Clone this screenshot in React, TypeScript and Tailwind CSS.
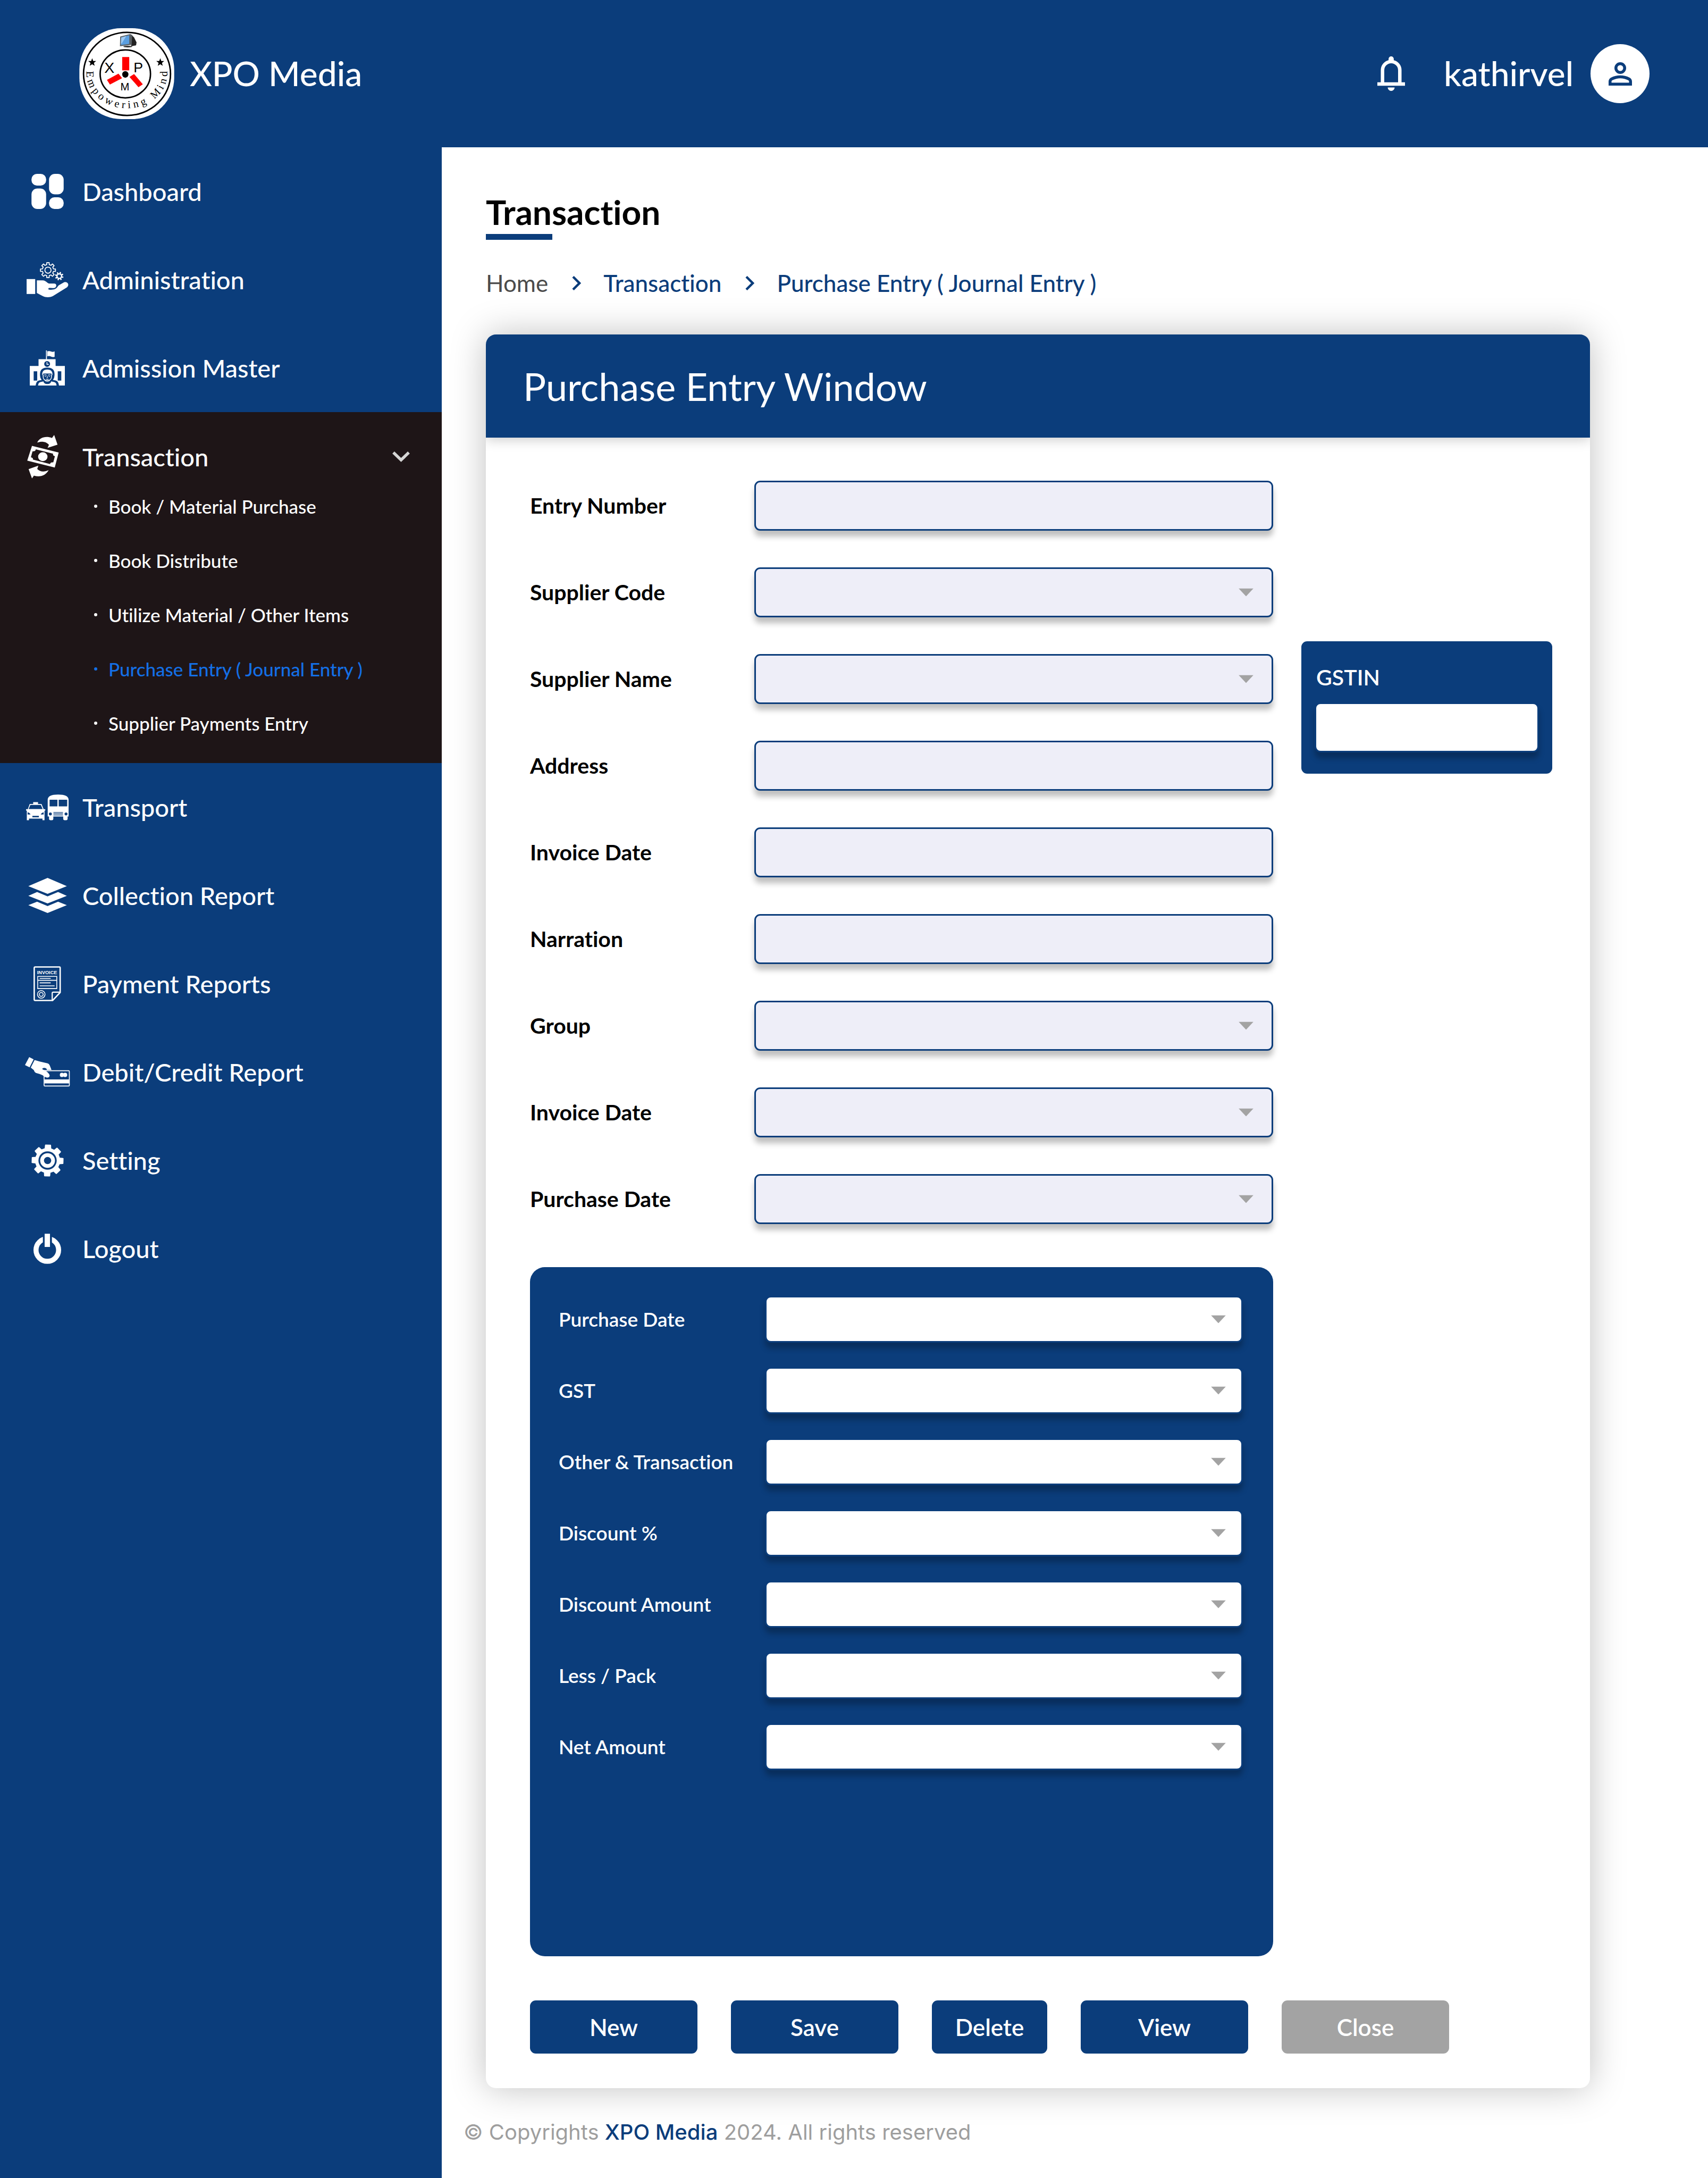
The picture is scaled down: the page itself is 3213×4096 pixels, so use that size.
import type { ReactNode } from 'react';

const NAVY = '#0b3d7b';

/** Outline of a toothed wheel as an SVG path. */
function gearPath(cx: number, cy: number, outer: number, inner: number, teeth: number, turn = 0) {
  const step = (Math.PI * 2) / teeth;
  const points: string[] = [];
  for (let i = 0; i < teeth; i++) {
    const a = i * step + turn - Math.PI / 2;
    const corners: [number, number][] = [
      [inner, -0.29],
      [outer, -0.2],
      [outer, 0.2],
      [inner, 0.29],
    ];
    for (const [r, t] of corners) {
      points.push(`${(cx + r * Math.cos(a + t * step)).toFixed(2)} ${(cy + r * Math.sin(a + t * step)).toFixed(2)}`);
    }
  }
  return `M${points.join('L')}Z`;
}

function Logo() {
  const star = (x: number, y: number) => {
    const pts: string[] = [];
    for (let i = 0; i < 10; i++) {
      const r = i % 2 ? 3.6 : 8.6;
      const a = (i * Math.PI) / 5 - Math.PI / 2;
      pts.push(`${(x + r * Math.cos(a)).toFixed(1)},${(y + r * Math.sin(a)).toFixed(1)}`);
    }
    return <polygon points={pts.join(' ')} fill="#000" />;
  };
  return (
    <svg viewBox="0 0 194 186" className="h-[171px] w-[179px]" role="img" aria-label="XPO Media logo">
      <rect width="194" height="186" rx="86" ry="84" fill="#fff" />
      <ellipse cx="97.5" cy="93.5" rx="89" ry="85" fill="none" stroke="#000" strokeWidth="3" />
      <ellipse cx="94" cy="93.5" rx="51.5" ry="49" fill="none" stroke="#000" strokeWidth="3" />
      <ellipse cx="94" cy="94.5" rx="6.4" ry="6.8" fill="#000" />
      <rect x="87.6" y="59" width="14.4" height="27.3" fill="#f00" />
      <polygon points="56.4,105.7 80,93 87.4,102.3 62.5,115.3" fill="#f00" />
      <polygon points="102.5,99.7 111.9,93.7 129.8,114.7 120.9,120.7" fill="#f00" />
      <g fontFamily="Liberation Sans, sans-serif" fill="#000">
        <text x="51" y="91" fontSize="31">X</text>
        <text x="111" y="90" fontSize="29">P</text>
        <text x="84" y="127" fontSize="22">M</text>
      </g>
      {star(26.2, 70)}
      {star(165.5, 70)}
      <polygon points="107,14 112,19 117,29 116,35 106,37" fill="#222" />
      <polygon points="83.5,17 104,12 108,14 107,34 83,37" fill="#596066" />
      <polygon points="85.5,19 102,14.5 102,32 85,34.5" fill="#5b9fe0" />
      <polygon points="85.5,19 96,16 87,31 85,32" fill="#9bc8f2" />
      <ellipse cx="99" cy="37.6" rx="9" ry="1.8" fill="#333" />
      <path id="motto" d="M14.6 80V93A82.5 70.5 0 0 0 180 93V78" fill="none" />
      <text fontFamily="Liberation Serif, serif" fontSize="22" fill="#000" dx="0 6 6 6 6 6 6 6 6 6 6 6 6 6 6">
        <textPath href="#motto" startOffset="8">Empowering Mind</textPath>
      </text>
    </svg>
  );
}

const icons = {
  dashboard: (
    <svg viewBox="0 0 66 72" className="h-[66px] w-[61px]" fill="#fff" aria-hidden="true">
      <rect width="30" height="24" rx="11" />
      <rect x="36" width="30" height="42" rx="12" />
      <rect y="30" width="30" height="42" rx="12" />
      <rect x="36" y="48" width="30" height="24" rx="11" />
    </svg>
  ),
  administration: (
    <svg viewBox="0 0 86 72" className="h-[66px] w-[79px]" fill="#fff" aria-hidden="true">
      <rect y="34.7" width="17.6" height="30.6" />
      <path d="M21 37.3H33C40 37.3 42 44 48 44H56.5C62 44 62 50.5 58 52.5C55 53.8 50 53 46 53A1.8 1.8 0 0 0 46 56.5C54 57 60 56 63.5 50.5C64.5 48.5 65.5 47.5 67.5 46.5L77 41.3C84 39 88.5 46.5 83 51.5L54 69.500C47 73 39 72.5 33 69.5L21 63.3Z" />
      <path d={gearPath(43.8, 16.4, 15.6, 11.6, 8)} fill="none" stroke="#fff" strokeWidth="1.9" strokeLinejoin="round" />
      <circle cx="43.8" cy="16.4" r="6.3" fill="none" stroke="#fff" strokeWidth="1.9" />
      <path fillRule="evenodd" d={`${gearPath(67, 28.7, 8.8, 6, 8, 0.3)}M70.4 28.7A3.4 3.4 0 1 0 63.6 28.7A3.4 3.4 0 1 0 70.4 28.7Z`} />
    </svg>
  ),
  admission: (
    <svg viewBox="0 0 72 72" className="h-[66px] w-[66px]" fill="#fff" aria-hidden="true">
      <path d="M0 32H18V18H33.300V0H35.200V18H53V32H72V72H0Z" />
      <path d="M36 2Q40 .5 43.5 2.2T51 2V13Q47 14.5 43.5 12.5T36 12Z" />
      <circle cx="35.6" cy="27.7" r="6" fill={NAVY} />
      <path d="M35.3 24V28.6H39" fill="none" stroke="#fff" strokeWidth="1.5" />
      <path d="M8 42.7H15.3V62H8ZM57.4 42.7H64.7V62H57.4Z" fill={NAVY} />
      <path d="M12 72Q13 63 19 61.5L24.5 60.5Q20.5 56 21 48Q21.5 35.3 36 35.3T50.8 48Q51.2 56 47.5 60.5L53 61.5Q59 63 60 72Z" fill={NAVY} />
      <path d="M25.5 51Q24.5 39.3 36 39.3T46.5 51Q44.5 49 44 47.5L28 47.5Q27 49.5 25.5 51Z" />
      <path d="M27.5 49.5V53Q27 61.5 36 62Q45 61.5 44.5 53V49.5" fill="none" stroke="#fff" strokeWidth="1.6" />
      <path d="M29.5 50.5Q32 49 34.5 51M42.5 50.5Q40 49 37.5 51M30.5 53.2H33.5M38.5 53.2H41.5M36 52.5V56.5H34.8M33.5 59Q36 60.2 38.5 59" fill="none" stroke="#fff" strokeWidth="1.2" />
      <path d="M17 72Q17.5 66 22 65L28 63.5Q29 69 36 69T44 63.5L50 65Q54.5 66 55 72Z" />
      <path d="M30.5 61.5Q36 65.5 41.5 61.5" fill="none" stroke="#fff" strokeWidth="1.2" />
    </svg>
  ),
  transaction: (
    <svg viewBox="0 0 82 89" className="h-[82px] w-[76px]" fill="#fff" aria-hidden="true">
      <path d="M20.4 15.6C25 5 38 1.5 50.5 6.2L55 0L61.9 19.8L41.5 26.4L44.3 20.3C40 14 30 12 20.4 15.6Z" />
      <path d="M2.8 69.8L22.7 62.8L20.4 69.4C26 75 34 76.5 43.7 71.7C38 82.5 27 87 13.6 83L9.7 88.7Z" />
      <path
        fillRule="evenodd"
        d="M9.7 22.2L64.2 35.9L56.2 66.5L0 52.4ZM17.5 29.3Q17 34 10.8 33.3L7.5 45.5Q13 47 11.5 50.3L46.5 59.5Q47.5 55 53.2 56L56.5 43.5Q51.5 42 52.8 38.3Z"
      />
      <ellipse cx="31.8" cy="44.4" rx="9.6" ry="9" />
    </svg>
  ),
  transport: (
    <svg viewBox="0 0 87 53" className="h-[49px] w-[80px]" fill="#fff" aria-hidden="true">
      <path
        fillRule="evenodd"
        d="M44.3 10Q45 0 65.6 0T87 10V45H85V50Q85 52.5 82.5 52.5H78.5Q76 52.5 76 50V45H55.8V50Q55.8 52.5 53.5 52.5H49.5Q47 52.5 47 50V45H44.3ZM48.2 10.7V24.3H64.2V10.7ZM66.8 10.7V24.3H84.2V10.7Z"
      />
      <path d="M0 30H3.6L7.5 19.5H14.6V15.7H24.5V19.5H31.6L36 30H39.3V33H37.8V52.7H33.6V49.3H6V52.7H1.6V33H0Z" />
      <g fill={NAVY}>
        <path d="M5.3 29.7L8.8 21.2H30.3L34 29.7Z" />
        <path d="M3.3 36.3Q8 37.5 9 41H3.3ZM36 36.3Q31.5 37.5 30 41H36Z" />
        <rect x="13" y="43.7" width="13.2" height="3" />
        <circle cx="49.8" cy="39.7" r="3" />
        <circle cx="81.8" cy="39.7" r="3" />
        <rect x="56" y="36" width="19.5" height="1.3" />
        <rect x="56" y="38.7" width="19.5" height="1.3" />
        <rect x="56" y="41.4" width="19.5" height="1.3" />
      </g>
    </svg>
  ),
  collection: (
    <svg viewBox="0 0 79 72" className="h-[66px] w-[73px]" fill="#fff" aria-hidden="true">
      <path d="M39.5 0L79 17L39.5 32.7L0 17ZM0 36.7L18 29L39.5 38L61 29L79 36.7L39.5 52.3ZM0 56L18 48.7L39.5 57.7L61 48.7L79 56L39.5 72Z" />
    </svg>
  ),
  payment: (
    <svg viewBox="0 0 57 72" className="h-[66px] w-[52px]" fill="none" stroke="#fff" aria-hidden="true">
      <path d="M3.5 1.5H53.5Q55 1.5 55 3V54L39.5 70.5H3.5Q1.5 70.5 1.5 68.5V3.5Q1.5 1.5 3.5 1.5Z" strokeWidth="2.8" />
      <path d="M38.6 69.5V55.5Q38.6 53.5 40.6 53.5H55" strokeWidth="2.4" />
      <text x="7.5" y="16" fontSize="10" fontWeight="700" fontFamily="Liberation Sans, sans-serif" fill="#fff" stroke="none">
        INVOICE
      </text>
      <path d="M8.7 21H48V46H8.7ZM8.7 29H48" strokeWidth="1.7" />
      <path d="M12.7 25H35.5M12.7 34.2H35.5M12.7 40.4H43.5" strokeWidth="1.7" />
      <circle cx="16" cy="58" r="7.8" strokeWidth="1.7" />
      <circle cx="16" cy="58" r="4" strokeWidth="1.7" />
    </svg>
  ),
  debit: (
    <svg viewBox="0 0 93 61" className="h-[56px] w-[85px]" fill="#fff" aria-hidden="true">
      <path d="M8.7 0L17.8 4.5L9.5 21L0 16.2Z" />
      <rect x="39.3" y="27.9" width="52" height="31.4" rx="1.5" fill="none" stroke="#fff" strokeWidth="1.8" />
      <rect x="40" y="45.8" width="51" height="8.2" />
      <path
        fillRule="evenodd"
        d="M19.8 5.9L30 9L46.5 12.7Q49.5 13.5 51 17L54.6 26.5H44Q42 27.5 44 29Q50 33 50.8 38Q50.5 42.5 45 42Q40 41 36 37L30 34.5L22.5 32.5Q19.5 31 18 26.5L11.9 21.5ZM35.5 24.5Q38 26.5 41 26.8Q45 27 45 24.5Q42 21.5 38 22.3Q35.5 23 35.5 24.5Z"
      />
      <circle cx="76" cy="36.5" r="4.3" />
      <circle cx="82.6" cy="36.5" r="4.3" />
    </svg>
  ),
  setting: (
    <svg viewBox="0 0 66 66" className="h-[61px] w-[61px]" fill="#fff" aria-hidden="true">
      <path d={gearPath(33, 33, 31.5, 24.5, 8, 0.03)} stroke="#fff" strokeWidth="2.5" strokeLinejoin="round" />
      <circle cx="33" cy="33" r="18.6" fill={NAVY} />
      <circle cx="33" cy="33" r="15" />
      <circle cx="33" cy="33" r="7.4" fill={NAVY} />
    </svg>
  ),
  logout: (
    <svg viewBox="0 0 57 62" className="h-[57px] w-[52px]" fill="#fff" aria-hidden="true">
      <circle cx="28.5" cy="33.5" r="23.3" fill="none" stroke="#fff" strokeWidth="10.4" />
      <rect x="19.4" width="18.6" height="27" fill={NAVY} />
      <rect x="23" width="11" height="27.2" />
    </svg>
  ),
};

function NavItem({ icon, label }: { icon: ReactNode; label: string }) {
  return (
    <a href="#" className="flex h-[166px] items-center gap-4 pl-[39px] text-[47px] font-medium">
      <span className="flex w-[100px] justify-center">{icon}</span>
      {label}
    </a>
  );
}

const submenu = [
  'Book / Material Purchase',
  'Book Distribute',
  'Utilize Material / Other Items',
  'Purchase Entry ( Journal Entry )',
  'Supplier Payments Entry',
];

function Sidebar() {
  return (
    <nav className="w-[831px] shrink-0 bg-[#0b3d7b] text-white">
      <NavItem icon={icons.dashboard} label="Dashboard" />
      <NavItem icon={icons.administration} label="Administration" />
      <NavItem icon={icons.admission} label="Admission Master" />
      <div className="bg-[#1e1517] pt-[42px] pb-[24px]">
        <button type="button" aria-expanded="true" className="flex h-[84px] w-full items-center gap-4 pr-[60px] pl-[39px] text-left text-[47px] font-medium">
          <span className="flex w-[100px] justify-center">{icons.transaction}</span>
          <span className="flex-1">Transaction</span>
          <svg viewBox="0 0 33 20" className="h-[20px] w-[33px]" fill="none" stroke="#d6d6d6" strokeWidth="5.5" aria-hidden="true">
            <path d="M2 2L16.5 16L31 2" />
          </svg>
        </button>
        <ul>
          {submenu.map((label) => (
            <li key={label}>
              <a
                href="#"
                className={`flex h-[102px] items-center gap-[21px] pl-[177px] text-[35px] font-medium ${
                  label.startsWith('Purchase') ? 'text-[#146fe6]' : 'text-white'
                }`}
              >
                <span className="size-[6px] rounded-full bg-current" />
                {label}
              </a>
            </li>
          ))}
        </ul>
      </div>
      <NavItem icon={icons.transport} label="Transport" />
      <NavItem icon={icons.collection} label="Collection Report" />
      <NavItem icon={icons.payment} label="Payment Reports" />
      <NavItem icon={icons.debit} label="Debit/Credit Report" />
      <NavItem icon={icons.setting} label="Setting" />
      <NavItem icon={icons.logout} label="Logout" />
    </nav>
  );
}

function Header() {
  return (
    <header className="flex h-[277px] items-center bg-[#0b3d7b] pr-[110px] pl-[149px] text-[64px] font-medium text-white">
      <Logo />
      <span className="ml-[29px] flex-1">XPO Media</span>
      <button type="button" aria-label="Notifications">
        <svg viewBox="4 2 16 20" className="h-[65px] w-[52px]" fill="#fff" aria-hidden="true">
          <path d="M4 19v-2h2v-7q0-2.075 1.25-3.687T10.5 4.2v-.7q0-.625.438-1.062T12 2t1.063.438T13.5 3.5v.7q2 .5 3.25 2.113T18 10v7h2v2zm8 3q-.825 0-1.412-.587T10 20h4q0 .825-.587 1.413T12 22m-4-5h8v-7q0-1.65-1.175-2.825T12 6T9.175 7.175T8 10z" />
        </svg>
      </button>
      <span className="mr-[32px] ml-[73px]">kathirvel</span>
      <button type="button" aria-label="Account" className="flex size-[111px] items-center justify-center rounded-full bg-white">
        <svg viewBox="4 4 16 16" className="size-[44px]" fill={NAVY} aria-hidden="true">
          <path d="M12 12q-1.65 0-2.825-1.175T8 8t1.175-2.825T12 4t2.825 1.175T16 8t-1.175 2.825T12 12m-8 8v-2.8q0-.85.438-1.562T5.6 14.55q1.55-.775 3.15-1.162T12 13t3.25.388t3.15 1.162q.725.375 1.163 1.088T20 17.2V20zm2-2h12v-.8q0-.275-.137-.5t-.363-.35q-1.35-.675-2.725-1.012T12 15t-2.775.338T6.5 16.35q-.225.125-.363.35T6 17.2zm6-8q.825 0 1.413-.587T14 8t-.587-1.412T12 6t-1.412.588T10 8t.588 1.413T12 10" />
        </svg>
      </button>
    </header>
  );
}

function Separator() {
  return (
    <svg viewBox="0 0 17 27" className="mr-[42px] ml-[45px] h-[27px] w-[17px]" fill="none" stroke={NAVY} strokeWidth="4.5" aria-hidden="true">
      <path d="M2 1.500L14 13.500L2 25.500" />
    </svg>
  );
}

function Arrow({ className }: { className: string }) {
  return (
    <svg viewBox="0 0 28 15" className={`pointer-events-none absolute top-1/2 h-[15px] w-[28px] -translate-y-1/2 ${className}`} fill="#a3a3a3" aria-hidden="true">
      <path d="M0 0H28L14 15Z" />
    </svg>
  );
}

const fields = [
  { id: 'entry-number', label: 'Entry Number', select: false },
  { id: 'supplier-code', label: 'Supplier Code', select: true },
  { id: 'supplier-name', label: 'Supplier Name', select: true },
  { id: 'address', label: 'Address', select: false },
  { id: 'invoice-date', label: 'Invoice Date', select: false },
  { id: 'narration', label: 'Narration', select: false },
  { id: 'group', label: 'Group', select: true },
  { id: 'invoice-date-2', label: 'Invoice Date', select: true },
  { id: 'purchase-date', label: 'Purchase Date', select: true },
];

const totals = [
  { id: 'total-date', label: 'Purchase Date' },
  { id: 'total-gst', label: 'GST' },
  { id: 'total-other', label: 'Other & Transaction' },
  { id: 'total-discount', label: 'Discount %' },
  { id: 'total-discount-amount', label: 'Discount Amount' },
  { id: 'total-less', label: 'Less / Pack' },
  { id: 'total-net', label: 'Net Amount' },
];

const fieldBox =
  'h-[94px] w-full appearance-none rounded-[11px] border-[3px] border-[#0b3d7b] bg-[#eeeef8] px-8 text-[38px] shadow-[0_11px_11px_rgba(0,0,0,0.25)] outline-none';

const button = 'h-[100px] rounded-[11px] text-white';

export default function App() {
  return (
    <div className="flex min-h-screen flex-col bg-white font-['Lato',sans-serif] leading-[1.2] text-black [font-variant-ligatures:none]">
      <Header />
      <div className="flex flex-1">
        <Sidebar />
        <main className="flex min-w-0 flex-1 flex-col">
          <div className="pt-[82px] pr-[222px] pl-[83px]">
            <h1 className="text-[64px] leading-[80px] font-bold">Transaction</h1>
            <div className="mt-px h-[11px] w-[125px] bg-[#0b3d7b]" />
            <nav aria-label="Breadcrumb" className="mt-[54px] flex h-[54px] items-center text-[44px] font-medium text-[#0b3d7b]">
              <a href="#" className="font-normal text-[#4b4b4b]">Home</a>
              <Separator />
              <a href="#">Transaction</a>
              <Separator />
              <a href="#">Purchase Entry ( Journal Entry )</a>
            </nav>

            <section className="mt-[70px] overflow-hidden rounded-[19px] bg-white shadow-[0_0_66px_rgba(0,0,0,0.25)]">
              <h2 className="flex h-[194px] items-center bg-[#0b3d7b] pl-[70px] text-[72px] text-white shadow-[0_3px_22px_rgba(0,0,0,0.22)]">
                Purchase Entry Window
              </h2>
              <form className="px-[71px] pt-[81px] pb-[65px]">
                <div className="flex items-start gap-[53px] pl-[12px]">
                  <div className="min-w-0 flex-1">
                    <div className="flex flex-col gap-[69px]">
                      {fields.map((f) => (
                        <div key={f.id} className="flex items-center">
                          <label htmlFor={f.id} className="w-[422px] shrink-0 text-[41px] font-bold">{f.label}</label>
                          {f.select ? (
                            <div className="relative flex-1">
                              <select id={f.id} className={fieldBox} />
                              <Arrow className="right-[37px]" />
                            </div>
                          ) : (
                            <input id={f.id} type="text" className={fieldBox} />
                          )}
                        </div>
                      ))}
                    </div>

                    <div className="mt-[81px] flex min-h-[1296px] flex-col gap-[46px] rounded-[28px] bg-[#0b3d7b] py-[54px] pr-[57px] pl-[54px]">
                      {totals.map((f) => (
                        <div key={f.id} className="flex items-center">
                          <label htmlFor={f.id} className="w-[388px] shrink-0 text-[37px] font-semibold text-white">{f.label}</label>
                          <div className="relative flex-1">
                            <select
                              id={f.id}
                              className="h-[88px] w-full appearance-none rounded-[11px] border-[3px] border-[#0b3d7b] bg-white px-8 text-[36px] shadow-[0_11px_11px_rgba(0,0,0,0.25)] outline-none"
                            />
                            <Arrow className="right-[32px]" />
                          </div>
                        </div>
                      ))}
                    </div>
                  </div>

                  <div className="mt-[302px] flex h-[249px] w-[472px] shrink-0 flex-col rounded-[11px] bg-[#0b3d7b] px-[25px] pt-[44px]">
                    <label htmlFor="gstin" className="pl-[3px] text-[41px] leading-[48px] font-semibold text-white">GSTIN</label>
                    <input
                      id="gstin"
                      type="text"
                      className="mt-[23px] h-[94px] w-full rounded-[11px] border-[3px] border-[#0b3d7b] bg-white px-8 text-[38px] shadow-[0_11px_11px_rgba(0,0,0,0.25)] outline-none"
                    />
                  </div>
                </div>

                <div className="mt-[83px] flex gap-[63px] pl-[12px] text-[44px] font-semibold">
                  <button type="button" className={`${button} w-[315px] bg-[#0b3d7b]`}>New</button>
                  <button type="button" className={`${button} w-[315px] bg-[#0b3d7b]`}>Save</button>
                  <button type="button" className={`${button} w-[217px] bg-[#0b3d7b]`}>Delete</button>
                  <button type="button" className={`${button} w-[315px] bg-[#0b3d7b]`}>View</button>
                  <button type="button" className={`${button} w-[315px] bg-[#a3a3a3]`}>Close</button>
                </div>
              </form>
            </section>
          </div>
          <footer className="mt-[59px] pl-[41px] font-['Inter',sans-serif] text-[40px] leading-[48px] text-[#9e9e9e]">
            © Copyrights <span className="font-medium text-[#0b3d7b]">XPO Media</span> 2024. All rights reserved
          </footer>
        </main>
      </div>
    </div>
  );
}
